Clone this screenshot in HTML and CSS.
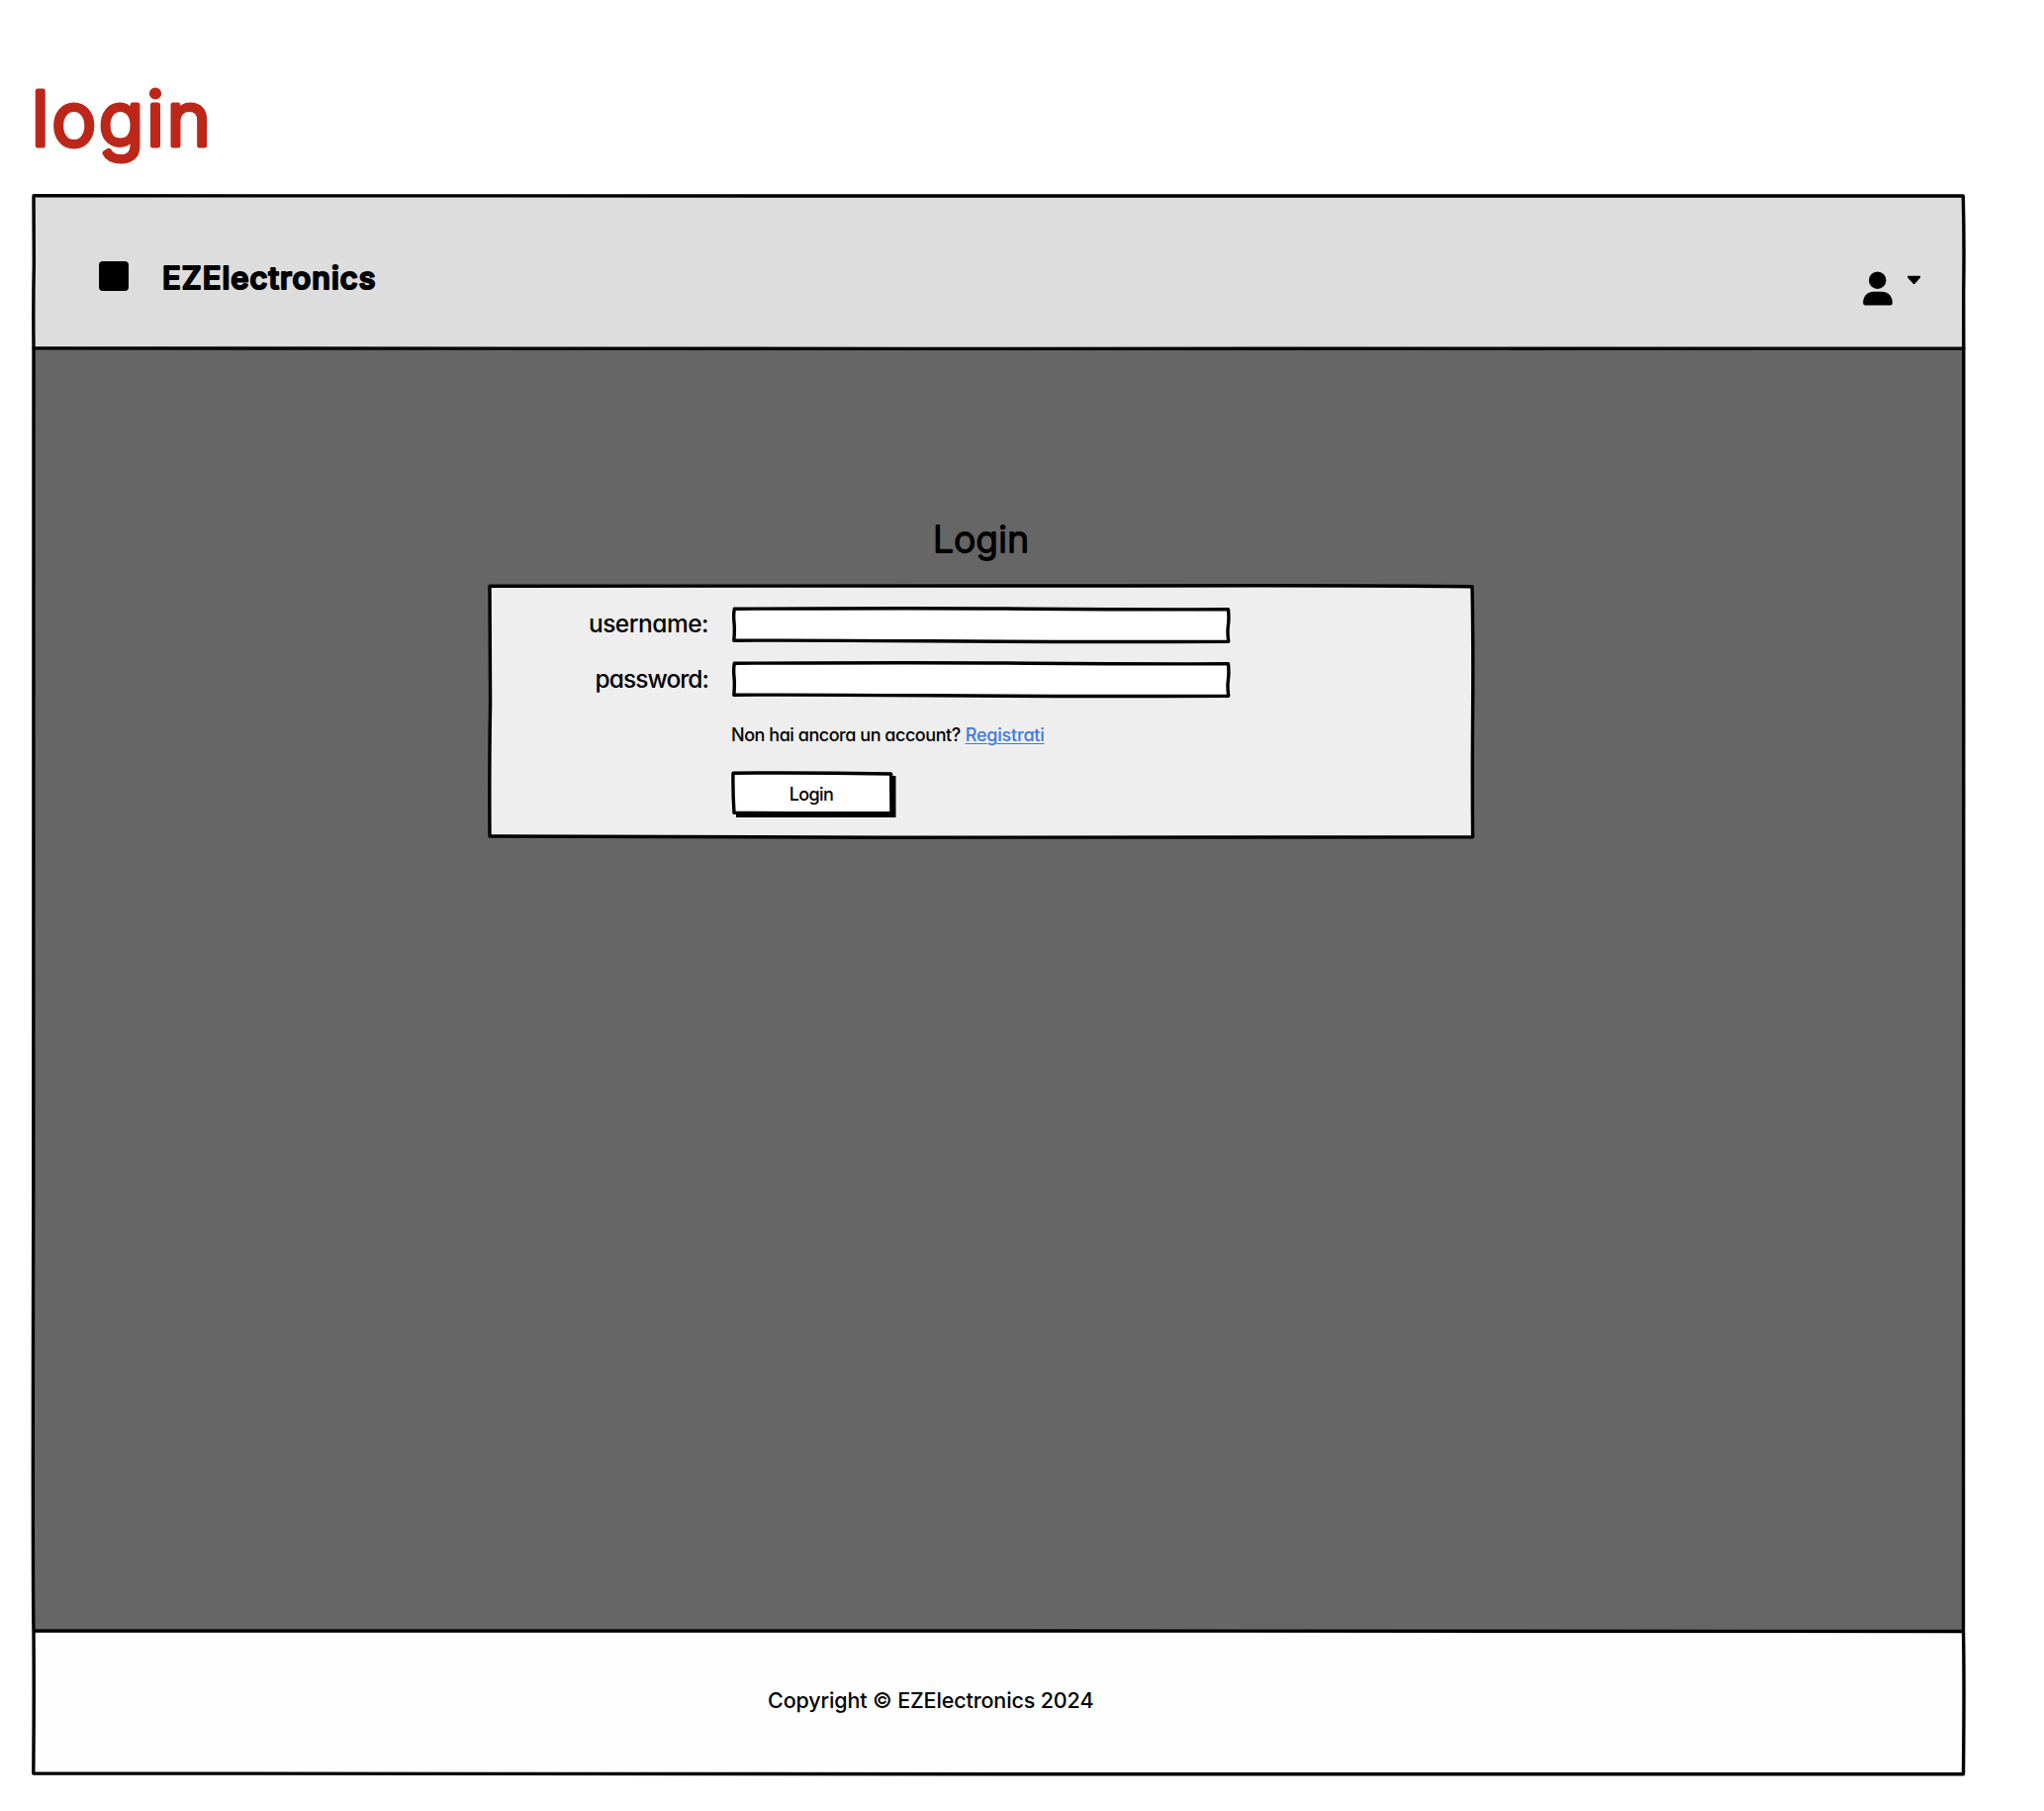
FILE: index.html
```html
<!DOCTYPE html>
<html lang="it">
<head>
<meta charset="utf-8">
<title>EZElectronics - Login</title>
<link rel="stylesheet" href="styles.css">
</head>
<body>
<h1 class="page-title"><svg class="round-text t-title" width="240" height="100" viewBox="0 0 240 100"><text x="-1" y="76.5" textLength="181">login</text></svg></h1>
<div class="app">
  <header class="header">
    <div class="brand">
      <span class="logo"></span>
      <svg class="round-text t-brand" width="230" height="40" viewBox="0 0 230 40"><text x="1" y="31" textLength="215.5">EZElectronics</text></svg>
    </div>
    <div class="user-menu">
      <svg class="user-icon" width="30" height="35" viewBox="0 0 30 35"><circle cx="14.7" cy="9.2" r="8.7"/><path d="M10.5 20.8H19.5C26 20.8 29.8 26 29.8 32Q29.8 34.4 28 34.4H2Q.1 34.4.1 32C.1 26 4 20.8 10.5 20.8Z"/></svg>
      <svg class="caret" width="16" height="10" viewBox="0 0 16 10"><path d="M2 .8H13.4Q15 1.3 13.6 3L8.5 8.8Q7.7 9.6 6.9 8.8L1.6 3Q.2 1.3 2 .8Z"/></svg>
    </div>
    <svg class="sketch" width="1955" height="156" viewBox="0 0 1955 156"><path d="M2 1.8Q500 1.2 1000 2T1952.3 2Q1953.5 50 1952.7 100L1952.8 156Q1400 156.8 900 156.4T2 155.8Q1.5 110 2.3 70Z"/></svg>
  </header>
  <main class="main">
    <h2 class="heading"><svg class="round-text t-heading" width="110" height="56" viewBox="0 0 110 56"><text x="6" y="41" textLength="97">Login</text></svg></h2>
    <form class="card">
      <label class="label t-user" for="u">username:</label>
      <div class="field"><input class="input" id="u" type="text"><svg class="sketch" width="504" height="37" viewBox="0 0 504 37"><path d="M2.3 2.2Q200 1.4 300 2.2T501.5 2.8Q502.4 12 501.4 19T501.7 35.2Q330 35.8 200 34.8T1.8 34.2Q2.8 24 2 16T2.3 2.2Z"/></svg></div>
      <label class="label t-pass" for="p">password:</label>
      <div class="field"><input class="input" id="p" type="password"><svg class="sketch" width="504" height="37" viewBox="0 0 504 37"><path d="M2.3 2.2Q200 1.4 300 2.2T501.5 2.8Q502.4 12 501.4 19T501.7 35.2Q330 35.8 200 34.8T1.8 34.2Q2.8 24 2 16T2.3 2.2Z"/></svg></div>
      <p class="signup"><span class="t-ask">Non hai ancora un account?</span><a class="link" href="#">Registrati</a></p>
      <button class="button" type="button"><svg class="sketch" width="168" height="48" viewBox="0 0 168 48"><path class="shade" d="M5 5H166.5V47H5Z"/><path class="face" d="M2 2.2Q80 1.6 161.6 3L162 42.6Q80 43 3 42.4Q1.6 20 2 2.2Z"/></svg><span class="t-btn">Login</span></button>
      <svg class="sketch" width="998" height="258" viewBox="0 0 998 258"><path d="M2 2.3Q300 2.8 600 2T995 2.7Q996.2 60 995.6 130T995.6 255.8Q600 256.6 400 256.2T2 255Q1.5 180 2.6 120Z"/></svg>
    </form>
  </main>
  <footer class="footer"><span class="t-copy">Copyright © EZElectronics 2024</span></footer>
  <svg class="sketch" width="1955" height="1599" viewBox="0 0 1955 1599"><path d="M2 156Q2.8 600 1.8 1000T2 1452Q500 1451.4 1000 1452T1952.5 1452.5Q1951.8 900 1952.8 500V156M2 1452Q2.5 1520 1.8 1596Q600 1597.5 1100 1596.8T1952.5 1596.7Q1953.5 1500 1952.5 1452"/></svg>
</div>
</body>
</html>
```
FILE: styles.css
```css
* { box-sizing: border-box; }
body { margin: 0; min-height: 1830px; background: #fff; color: #000; font-family: Inter, "Liberation Sans", sans-serif; font-feature-settings: "cv11"; font-weight: 500; }
h1, h2, p { margin: 0; font-weight: 500; }
/* Headline lettering with rounded stroke ends */
.round-text { display: block; overflow: visible; stroke-linejoin: round; fill: currentColor; stroke: currentColor; }
.page-title { padding: 70px 0 26px 33px; color: #bc271a; }
.t-title { font-size: 75px; font-weight: 300; stroke-width: 5px; }
.t-brand { font-size: 31px; font-weight: 500; stroke-width: 2.2px; }
.t-heading { font-size: 37px; font-weight: 300; stroke-width: 1.8px; }
.app { position: relative; width: 1955px; height: 1599px; margin-left: 32px; display: flex; flex-direction: column; }
.sketch { position: absolute; left: 0; top: 0; overflow: visible; pointer-events: none; fill: none; stroke: #000; stroke-width: 3.4; stroke-linejoin: round; stroke-linecap: round; }
.header { position: relative; height: 156px; margin: 0 2px; padding: 65px 42px 0 66px; background: #ddd; display: flex; justify-content: space-between; align-items: flex-start; }
.header > .sketch { left: -2px; }
.brand { display: flex; gap: 33px; }
.logo { width: 30px; height: 30px; margin-top: 3px; border-radius: 4px; background: #000; }
.user-menu { display: flex; gap: 14px; padding-top: 13px; }
.caret { margin-top: 4px; }
.main { height: 1296px; margin: 0 2px; padding: 165px 0 0 459px; background: #666; }
.heading { width: 998px; height: 73px; display: flex; justify-content: center; }
.card { position: relative; width: 998px; height: 258px; padding: 21px 0 0 18px; border: 2px solid transparent; background: #eee; background-clip: padding-box; display: grid; grid-template-columns: 204px 504px; grid-template-rows: 37px 37px 38px 48px; column-gap: 23px; row-gap: 18px; }
.card > .sketch { left: -2px; top: -2px; }
.label { padding-right: 1px; text-align: right; font-size: 24.5px; line-height: 34px; }
.t-user { letter-spacing: -.5px; }
.t-pass { line-height: 36px; letter-spacing: -.95px; }
.field { position: relative; height: 37px; }
.input { display: block; width: 500px; height: 33px; margin: 2px; padding: 0 8px; border: 0; outline: 0; background: #fff; font: inherit; }
.signup { grid-column: 2; display: flex; gap: 5px; margin-left: -1px; font-size: 18px; line-height: 39px; white-space: nowrap; }
.t-ask { letter-spacing: -.46px; }
.link { color: #3d79e2; letter-spacing: -.2px; text-decoration: underline; text-underline-offset: 2px; text-decoration-thickness: 1px; }
.button { grid-column: 2; position: relative; width: 168px; height: 48px; margin-left: -1px; padding: 0 6px 2px 0; border: 0; background: none; color: #000; font: inherit; font-size: 18px; }
.button span { position: relative; letter-spacing: -.6px; }
.shade { fill: #000; stroke: none; }
.face { fill: #fff; }
.footer { height: 147px; margin: 0 2px; padding: 54px 0 0 742px; background: #fefefe; font-size: 21.5px; line-height: 32px; }
.t-copy { letter-spacing: -.13px; }
```
